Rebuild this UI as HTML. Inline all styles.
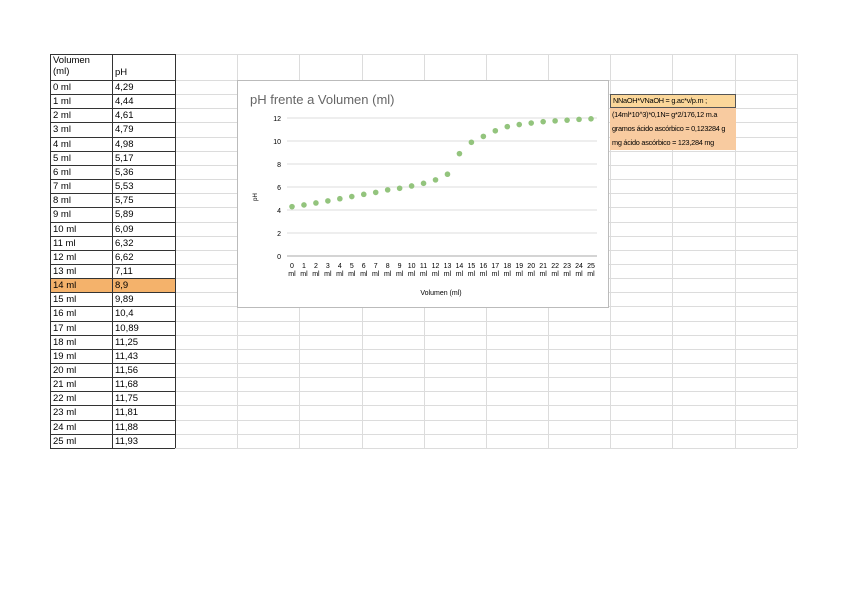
<!DOCTYPE html><html><head><style>
body{margin:0;width:848px;height:599px;background:#fff;position:relative;font-family:"Liberation Sans",sans-serif;overflow:hidden}
.a{position:absolute}
.c{position:absolute;font-size:9.5px;line-height:14px;padding-left:2px;box-sizing:border-box;color:#000;white-space:nowrap}
.r{font-size:7.3px;letter-spacing:-0.25px}
</style></head><body>
<svg class="a" style="left:0;top:0" width="848" height="599">
<g stroke="#dcdcdc" stroke-width="1">
<line x1="175" y1="54.5" x2="797" y2="54.5"/>
<line x1="175" y1="80.5" x2="797" y2="80.5"/>
</g>
<g id="g" stroke="#dcdcdc" stroke-width="1"></g>
<g id="t" stroke="#333" stroke-width="1" fill="none"></g>
</svg>
<script>
var g=document.getElementById('g'),t=document.getElementById('t'),s='';
var xs=[175,237,299,362,424,486,548,610,672,735,797];
for(var i=0;i<=26;i++){var y=Math.round(80+i*14.15)+.5;s+='<line x1="175" y1="'+y+'" x2="797" y2="'+y+'"/>';}
xs.forEach(function(x){s+='<line x1="'+(x+.5)+'" y1="54" x2="'+(x+.5)+'" y2="448"/>';});
g.innerHTML=s;s='';
for(var i=0;i<=26;i++){var y=Math.round(80+i*14.15)+.5;s+='<line x1="50" y1="'+y+'" x2="175" y2="'+y+'"/>';}
s+='<line x1="50" y1="54.5" x2="175" y2="54.5"/>';
[50,112,175].forEach(function(x){s+='<line x1="'+(x+.5)+'" y1="54" x2="'+(x+.5)+'" y2="448"/>';});
t.innerHTML=s;
var ph=['4,29','4,44','4,61','4,79','4,98','5,17','5,36','5,53','5,75','5,89','6,09','6,32','6,62','7,11','8,9','9,89','10,4','10,89','11,25','11,43','11,56','11,68','11,75','11,81','11,88','11,93'];
var h='';
for(var i=0;i<26;i++){var y=Math.round(80+i*14.15)+1;var bg=i==14?'background:#f4b26b;':'';
h+='<div class="c" style="left:51px;top:'+y+'px;width:61px;height:13px;'+bg+'">'+i+' ml</div><div class="c" style="left:113px;top:'+y+'px;width:62px;height:13px;'+bg+'">'+ph[i]+'</div>';}
document.write(h);
</script>
<div class="c" style="left:51px;top:55px;line-height:11px;">Volumen<br>(ml)</div>
<div class="c" style="left:113px;top:66px;">pH</div>
<div class="a" style="left:237px;top:80px;width:370px;height:226px;background:#fff;border:1px solid #bbb"></div>
<div class="a" style="left:250px;top:92px;font-size:13px;color:#666">pH frente a Volumen (ml)</div>
<svg class="a" style="left:237px;top:80px" width="372" height="228" font-family="Liberation Sans" font-size="7" fill="#000">
<g stroke="#ddd"><line x1="50" y1="38" x2="360" y2="38"/><line x1="50" y1="61" x2="360" y2="61"/><line x1="50" y1="84" x2="360" y2="84"/><line x1="50" y1="107" x2="360" y2="107"/><line x1="50" y1="130" x2="360" y2="130"/><line x1="50" y1="153" x2="360" y2="153"/></g>
<line x1="50" y1="176" x2="360" y2="176" stroke="#aaa"/>
<g text-anchor="end"><text x="44" y="41">12</text><text x="44" y="64">10</text><text x="44" y="87">8</text><text x="44" y="110">6</text><text x="44" y="133">4</text><text x="44" y="156">2</text><text x="44" y="179">0</text></g>
<text x="20" y="117" transform="rotate(-90 20 117)" text-anchor="middle" font-size="6">pH</text>
<text x="204" y="215" text-anchor="middle">Volumen (ml)</text>
<g id="pts"></g>
</svg>
<script>
var p='';var v=[4.29,4.44,4.61,4.79,4.98,5.17,5.36,5.53,5.75,5.89,6.09,6.32,6.62,7.11,8.9,9.89,10.4,10.89,11.25,11.43,11.56,11.68,11.75,11.81,11.88,11.93];
for(var i=0;i<26;i++){var x=55+i*11.96;p+='<circle cx="'+x+'" cy="'+(176-v[i]*11.5)+'" r="2.8" fill="#93c47d"/><text x="'+x+'" y="188" text-anchor="middle">'+i+'</text><text x="'+x+'" y="196" text-anchor="middle">ml</text>';}
document.getElementById('pts').innerHTML=p;
</script>
<div class="a r" style="left:610px;top:94px;width:126px;height:14px;background:#fbd79a;border:1px solid #555;box-sizing:border-box;line-height:12px;padding-left:2px;white-space:nowrap">NNaOH*VNaOH = g.ac*v/p.m ;</div>
<div class="a" style="left:610px;top:108px;width:126px;height:42px;background:#f8cba0"></div>
<div class="c r" style="left:610px;top:108px">(14ml*10^3)*0,1N= g*2/176,12 m.a</div>
<div class="c r" style="left:610px;top:122px">gramos ácido ascórbico = 0,123284 g</div>
<div class="c r" style="left:610px;top:136px">mg ácido ascórbico = 123,284 mg</div>
</body></html>
